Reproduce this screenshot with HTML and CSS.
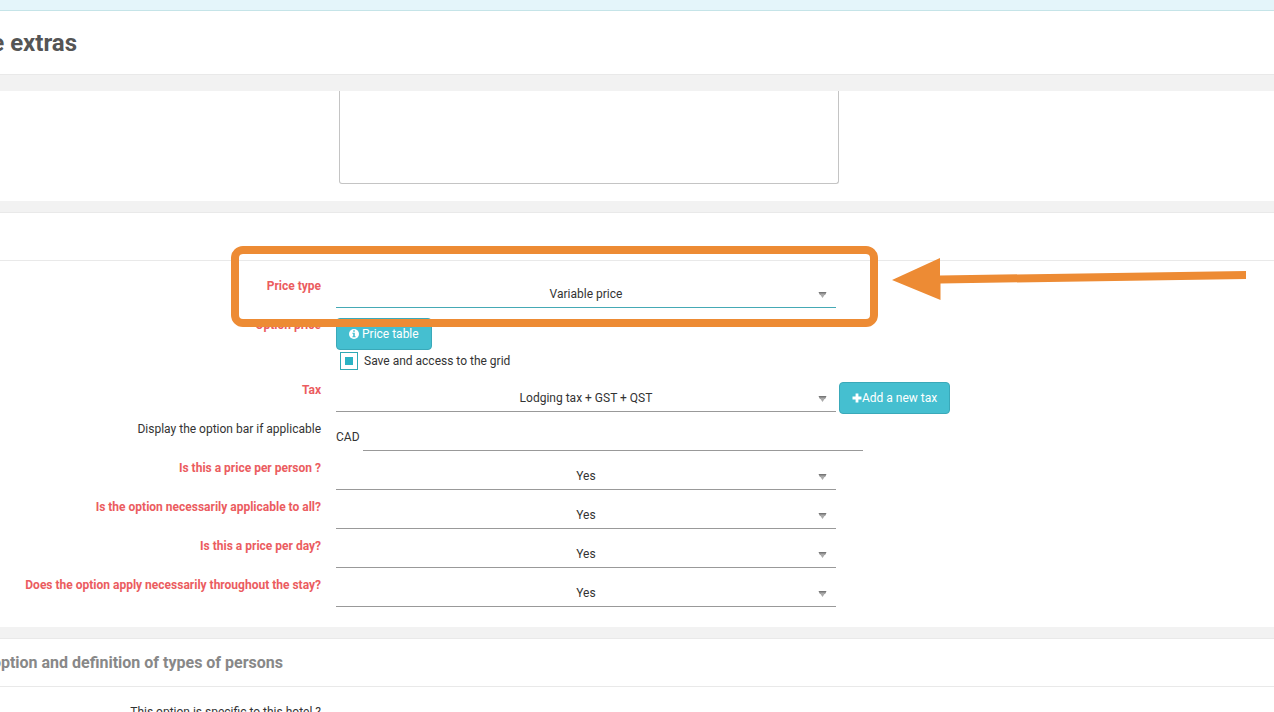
FILE: index.html
```html
<!DOCTYPE html>
<html lang="en">
<head>
<meta charset="utf-8">
<title>Extras</title>
<link rel="stylesheet" href="styles.css">
</head>
<body>
<div class="notice"></div>
<header class="page-header"><h1 class="page-title">e extras</h1></header>
<main class="content">
  <section class="panel panel-description">
    <textarea class="description" aria-label="Description"></textarea>
  </section>

  <section class="panel panel-price">
    <div class="panel-heading"></div>
    <form class="panel-body">
      <div class="row">
        <label class="label required" for="price-type">Price type</label>
        <div class="field">
          <div class="select active">
            <select id="price-type"><option>Variable price</option></select>
            <svg class="caret" viewBox="0 0 9 6"><path class="caret-top" d="M.5 0h8L7 3H2z"/><path class="caret-tip" d="M1.500 1.500h6L4.500 6z"/></svg>
          </div>
        </div>
      </div>
      <div class="row row-option">
        <label class="label required" for="price-table">Option price</label>
        <div class="field field-stack">
          <button class="button" id="price-table" type="button">
            <svg class="icon-info" viewBox="0 0 10 10"><circle cx="5" cy="5" r="5" fill="#fff"/><path d="M4.200 1.300h1.600v1.400H4.200zM3.400 3.700h2.400v3.500h.8v1.100H3.400V7.200h.8V4.800h-.8z" fill="#45bfd0"/></svg>
            Price table
          </button>
          <label class="check"><input type="checkbox" checked><span>Save and access to the grid</span></label>
        </div>
      </div>
      <div class="row">
        <label class="label required" for="tax">Tax</label>
        <div class="field">
          <div class="select">
            <select id="tax"><option>Lodging tax + GST + QST</option></select>
            <svg class="caret" viewBox="0 0 9 6"><path class="caret-top" d="M.5 0h8L7 3H2z"/><path class="caret-tip" d="M1.500 1.500h6L4.500 6z"/></svg>
          </div>
          <button class="button button-add" type="button"><svg class="icon-plus" viewBox="0 0 10 10"><path d="M5 .5v9M.5 5h9" stroke="#fff" stroke-width="2.800"/></svg>Add a new tax</button>
        </div>
      </div>
      <div class="row">
        <label class="label" for="option-bar">Display the option bar if applicable</label>
        <div class="field">
          <span class="currency">CAD</span>
          <input class="text-input" id="option-bar" type="text">
        </div>
      </div>
      <div class="row">
        <label class="label required" for="per-person">Is this a price per person ?</label>
        <div class="field">
          <div class="select">
            <select id="per-person"><option>Yes</option></select>
            <svg class="caret" viewBox="0 0 9 6"><path class="caret-top" d="M.5 0h8L7 3H2z"/><path class="caret-tip" d="M1.500 1.500h6L4.500 6z"/></svg>
          </div>
        </div>
      </div>
      <div class="row">
        <label class="label required" for="all">Is the option necessarily applicable to all?</label>
        <div class="field">
          <div class="select">
            <select id="all"><option>Yes</option></select>
            <svg class="caret" viewBox="0 0 9 6"><path class="caret-top" d="M.5 0h8L7 3H2z"/><path class="caret-tip" d="M1.500 1.500h6L4.500 6z"/></svg>
          </div>
        </div>
      </div>
      <div class="row">
        <label class="label required" for="per-day">Is this a price per day?</label>
        <div class="field">
          <div class="select">
            <select id="per-day"><option>Yes</option></select>
            <svg class="caret" viewBox="0 0 9 6"><path class="caret-top" d="M.5 0h8L7 3H2z"/><path class="caret-tip" d="M1.500 1.500h6L4.500 6z"/></svg>
          </div>
        </div>
      </div>
      <div class="row">
        <label class="label required" for="stay">Does the option apply necessarily throughout the stay?</label>
        <div class="field">
          <div class="select">
            <select id="stay"><option>Yes</option></select>
            <svg class="caret" viewBox="0 0 9 6"><path class="caret-top" d="M.5 0h8L7 3H2z"/><path class="caret-tip" d="M1.500 1.500h6L4.500 6z"/></svg>
          </div>
        </div>
      </div>
    </form>
    <div class="highlight"></div>
    <svg class="arrow" viewBox="0 0 354 42"><path d="M0 22L48 0v17.500L354 13v8L48.500 25.500V42z" fill="#ed8b34"/></svg>
  </section>

  <section class="panel">
    <div class="panel-heading"><h2 class="panel-title">option and definition of types of persons</h2></div>
    <div class="panel-body">
      <div class="row"><span class="label">This option is specific to this hotel ?</span></div>
    </div>
  </section>
</main>
</body>
</html>
```
FILE: styles.css
```css
* { box-sizing: border-box; }

body {
  margin: 0;
  height: 100vh;
  overflow: hidden;
  background: #f2f2f2;
  color: #333;
  font: 12px/20px Roboto, "Liberation Sans", sans-serif;
}

.notice {
  height: 11px;
  background: #e4f5fa;
  border-bottom: 1px solid #c5e4e8;
}

.page-header {
  height: 64px;
  padding: 16px 0;
  background: #fff;
  border-bottom: 1px solid #e9e9e9;
}

.page-title,
.panel-title {
  display: flex;
  justify-content: flex-end;
  margin: 0;
  white-space: nowrap;
}

.page-title {
  width: 77px;
  color: #555;
  font-size: 24px;
  line-height: 32px;
}

.content {
  display: flex;
  flex-direction: column;
  gap: 11px;
  padding-top: 16px;
}

.panel {
  position: relative;
  flex: none;
  background: #fff;
  border-top: 1px solid #e9e9e9;
}

.panel-description {
  padding: 0 0 17px 339px;
  border-top: 0;
}

.description {
  display: block;
  width: 500px;
  height: 93px;
  background: #fff;
  border: 1px solid #c4c4c4;
  border-top: 0;
  border-radius: 0 0 3px 3px;
  resize: none;
}

.panel-heading {
  height: 48px;
  padding: 12px 0;
  border-bottom: 1px solid #e9e9e9;
}

.panel-title {
  width: 283px;
  color: #888;
  font-size: 16px;
  line-height: 24px;
}

.panel-body { padding: 14px 0; }

.row {
  display: grid;
  grid-template-columns: 321px 1fr;
  column-gap: 15px;
  min-height: 39px;
}

.row-option { min-height: 65px; }

.label {
  padding-top: 1px;
  text-align: right;
}

.required {
  color: #eb5c60;
  font-weight: bold;
}

.field {
  display: flex;
  align-items: flex-start;
  padding-top: 3px;
}

.field-stack {
  flex-direction: column;
  gap: 1px;
  padding-top: 4px;
}

.select {
  display: grid;
  width: 500px;
  height: 30px;
  border-bottom: 1px solid #999;
}

.select.active { border-color: #45a9b5; }

.select select,
.caret { grid-area: 1 / 1; }

.select select {
  appearance: none;
  width: 100%;
  padding: 3px 0 0;
  border: 0;
  background: none;
  color: inherit;
  font: inherit;
  text-align: center;
  text-align-last: center;
}

.caret {
  place-self: center end;
  width: 9px;
  height: 6px;
  margin: 4px 9px 0 0;
  pointer-events: none;
}

.caret-top { fill: #777; }
.caret-tip { fill: #aaa; }

.button {
  display: flex;
  align-items: center;
  gap: 3px;
  height: 32px;
  padding: 0 12px;
  background: #45bfd0;
  border: 1px solid #3aa9b9;
  border-radius: 4px;
  color: #fff;
  font: inherit;
}

.button-add {
  gap: 0;
  margin-left: 3px;
}

.icon-info,
.icon-plus {
  width: 10px;
  height: 10px;
}

.check {
  display: flex;
  align-items: center;
  gap: 6px;
  padding-left: 4px;
}

.check input {
  appearance: none;
  width: 18px;
  height: 18px;
  margin: 0;
  border: 1px solid #2fa9b5;
  background: linear-gradient(#2bb3c4, #2bb3c4) center / 8px 8px no-repeat;
}

.currency {
  margin-right: 3px;
  padding-top: 6px;
}

.text-input {
  width: 500px;
  height: 30px;
  padding: 3px 4px 0;
  border: 0;
  border-bottom: 1px solid #999;
  background: none;
  font: inherit;
}

.highlight {
  position: absolute;
  top: 33px;
  left: 231px;
  width: 647px;
  height: 81px;
  border: 8px solid #ed8b34;
  border-radius: 12px;
  pointer-events: none;
}

.arrow {
  position: absolute;
  top: 45px;
  left: 892px;
  width: 354px;
  height: 42px;
}
```
